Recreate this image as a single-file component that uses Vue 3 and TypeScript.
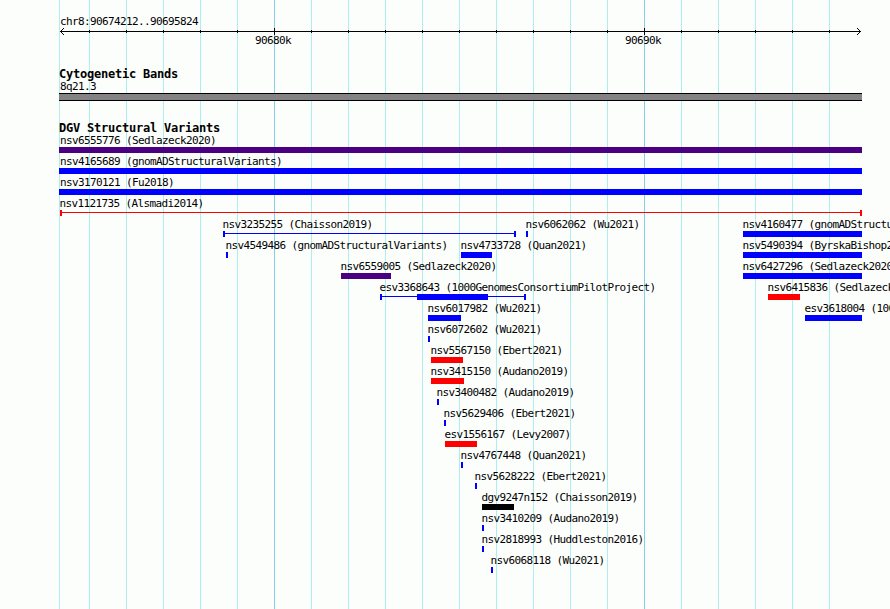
<template>
  <main class="browser">
    <div class="grid">
      <span class="grid-edge"></span>
      <span v-for="n in 21" :key="n" class="grid-line" :class="{ major: isMajor(n) }"></span>
    </div>

    <div class="panel">
      <section class="ruler">
        <div class="label region">chr8:90674212..90695824</div>
        <svg class="scale" width="803" height="7" viewBox="0 0 803 7" shape-rendering="crispEdges">
          <rect x="1" y="3" width="801" height="1" />
          <rect
            v-for="n in 21"
            :key="n"
            :x="30 + (n - 1) * 37"
            :y="isMajor(n) ? 0 : 2"
            width="1"
            :height="isMajor(n) ? 7 : 3"
          />
          <path d="M2 2h1v1h-1zM3 1h1v1h-1zM4 0h1v1h-1zM2 4h1v1h-1zM3 5h1v1h-1zM4 6h1v1h-1z" />
          <path d="M800 2h1v1h-1zM799 1h1v1h-1zM798 0h1v1h-1zM800 4h1v1h-1zM799 5h1v1h-1zM798 6h1v1h-1z" />
        </svg>
        <div class="scale-labels">
          <span class="label">90680k</span>
          <span class="label">90690k</span>
        </div>
      </section>

      <section class="bands">
        <h2 class="track-title">Cytogenetic Bands</h2>
        <div class="label band-name">8q21.3</div>
        <div class="band"></div>
      </section>

      <section class="variants">
        <h2 class="track-title">DGV Structural Variants</h2>
        <div v-for="(row, i) in rows" :key="i" class="row">
          <div
            v-for="v in row"
            :key="v.name"
            class="variant"
            :class="v.color"
            :style="{ left: v.start + 'px', width: v.end - v.start + 'px' }"
          >
            <span class="label" :class="{ inset: v.start === 0 }">{{ v.name }}</span>
            <div class="glyph" :class="{ span: v.span }">
              <i
                v-if="v.box"
                class="box"
                :style="{ marginLeft: v.box[0] - v.start + 'px', width: v.box[1] - v.box[0] + 'px' }"
              ></i>
            </div>
          </div>
        </div>
      </section>
    </div>
  </main>
</template>

<script setup lang="ts">
type Color = 'blue' | 'red' | 'indigo' | 'black';

interface Variant {
  name: string;
  start: number;
  end: number;
  color: Color;
  span?: boolean;
  box?: [number, number];
}

// start and end are offsets from the left edge of the panel
const rows: Variant[][] = [
  [{ name: 'nsv6555776 (Sedlazeck2020)', start: 0, end: 803, color: 'indigo' }],
  [{ name: 'nsv4165689 (gnomADStructuralVariants)', start: 0, end: 803, color: 'blue' }],
  [{ name: 'nsv3170121 (Fu2018)', start: 0, end: 803, color: 'blue' }],
  [{ name: 'nsv1121735 (Alsmadi2014)', start: 1, end: 803, color: 'red', span: true }],
  [
    { name: 'nsv3235255 (Chaisson2019)', start: 164, end: 457, color: 'blue', span: true },
    { name: 'nsv6062062 (Wu2021)', start: 467, end: 469, color: 'blue' },
    { name: 'nsv4160477 (gnomADStructuralVariants)', start: 684, end: 803, color: 'blue' }
  ],
  [
    { name: 'nsv4549486 (gnomADStructuralVariants)', start: 167, end: 169, color: 'blue' },
    { name: 'nsv4733728 (Quan2021)', start: 402, end: 433, color: 'blue' },
    { name: 'nsv5490394 (ByrskaBishop2022)', start: 684, end: 803, color: 'blue' }
  ],
  [
    { name: 'nsv6559005 (Sedlazeck2020)', start: 282, end: 332, color: 'indigo' },
    { name: 'nsv6427296 (Sedlazeck2020)', start: 684, end: 803, color: 'blue' }
  ],
  [
    {
      name: 'esv3368643 (1000GenomesConsortiumPilotProject)',
      start: 321,
      end: 467,
      color: 'blue',
      span: true,
      box: [358, 429]
    },
    { name: 'nsv6415836 (Sedlazeck2020)', start: 709, end: 741, color: 'red' }
  ],
  [
    { name: 'nsv6017982 (Wu2021)', start: 369, end: 402, color: 'blue' },
    { name: 'esv3618004 (1000GenomesConsortiumPhase3)', start: 746, end: 803, color: 'blue' }
  ],
  [{ name: 'nsv6072602 (Wu2021)', start: 369, end: 371, color: 'blue' }],
  [{ name: 'nsv5567150 (Ebert2021)', start: 372, end: 404, color: 'red' }],
  [{ name: 'nsv3415150 (Audano2019)', start: 372, end: 405, color: 'red' }],
  [{ name: 'nsv3400482 (Audano2019)', start: 378, end: 380, color: 'blue' }],
  [{ name: 'nsv5629406 (Ebert2021)', start: 385, end: 387, color: 'blue' }],
  [{ name: 'esv1556167 (Levy2007)', start: 386, end: 418, color: 'red' }],
  [{ name: 'nsv4767448 (Quan2021)', start: 402, end: 404, color: 'blue' }],
  [{ name: 'nsv5628222 (Ebert2021)', start: 416, end: 418, color: 'blue' }],
  [{ name: 'dgv9247n152 (Chaisson2019)', start: 423, end: 455, color: 'black' }],
  [{ name: 'nsv3410209 (Audano2019)', start: 423, end: 425, color: 'blue' }],
  [{ name: 'nsv2818993 (Huddleston2016)', start: 423, end: 425, color: 'blue' }],
  [{ name: 'nsv6068118 (Wu2021)', start: 432, end: 434, color: 'blue' }]
];

// one tick per 1k, a major one every 10k
const isMajor = (n: number) => n % 10 === 6;
</script>

<style>
body {
  margin: 0;
  background: #fcfefc;
}
</style>

<style scoped>
.browser {
  position: relative;
  width: 890px;
  height: 609px;
  overflow: hidden;
  background: #fcfefc;
  color: #000;
  font-family: "DejaVu Sans Mono", "Liberation Mono", monospace;
}

/* grid behind all the tracks */
.grid {
  position: absolute;
  inset: 0;
  display: flex;
  gap: 36px;
  padding-left: 59px;
}

.grid-edge,
.grid-line {
  flex: none;
  width: 1px;
  background: #afeeee;
}

.grid-edge {
  margin-right: -7px;
}

.grid-line.major {
  background: #87ceeb;
}

.panel {
  position: relative;
  width: 803px;
  margin-left: 59px;
  padding-top: 15px;
}

.label {
  display: block;
  height: 13px;
  font-size: 11px;
  line-height: 13px;
  letter-spacing: -0.623px;
  white-space: pre;
}

.region,
.band-name {
  padding-left: 1px;
}

.scale {
  display: block;
}

.scale-labels {
  display: flex;
  gap: 334px;
  margin-top: -1px;
  padding-left: 196px;
}

.scale-labels .label {
  width: 36px;
}

.bands {
  padding-top: 21px;
}

.track-title {
  height: 12px;
  margin: 0;
  font-size: 12px;
  line-height: 12px;
  letter-spacing: -0.225px;
  white-space: pre;
}

.band {
  box-sizing: border-box;
  height: 8px;
  border: solid #000;
  border-width: 1px 0;
  background: #848284;
}

.variants {
  padding-top: 21px;
}

.row {
  position: relative;
  height: 21px;
}

.variant {
  position: absolute;
  top: 0;
}

.variant .label {
  width: max-content;
  margin-left: -0.5px;
  color: #000;
}

.variant .label.inset {
  margin-left: 1px;
}

.glyph {
  height: 6px;
  background: currentColor;
}

.glyph.span {
  box-sizing: border-box;
  border: solid currentColor;
  border-width: 0 2px;
  background: linear-gradient(currentColor, currentColor) 0 2px / 100% 1px no-repeat;
}

.box {
  display: block;
  height: 6px;
  background: currentColor;
  transform: translateX(-2px);
}

.blue {
  color: #0000ff;
}

.red {
  color: #ff0000;
}

.indigo {
  color: #4b0082;
}

.black {
  color: #000;
}
</style>
